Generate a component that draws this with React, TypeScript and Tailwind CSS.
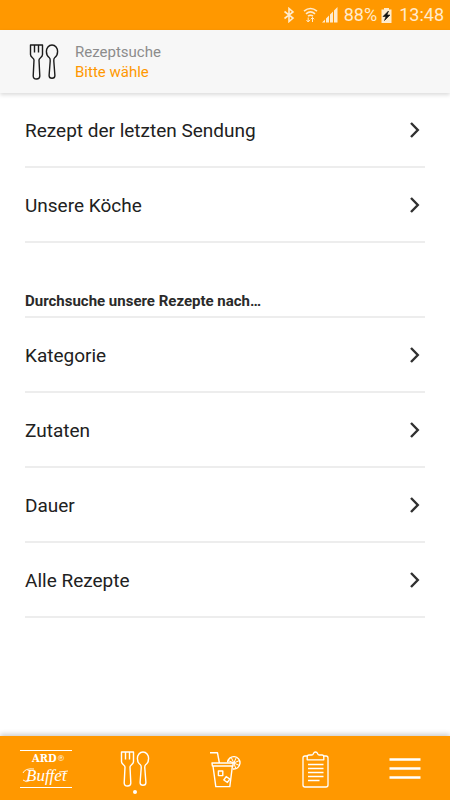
import React from "react";

const recipeRows = ["Rezept der letzten Sendung", "Unsere Köche"];
const filterRows = ["Kategorie", "Zutaten", "Dauer", "Alle Rezepte"];

function CutleryIcon() {
  return (
    <svg width="30" height="36" viewBox="0 0 30 36" fill="none" stroke="currentColor" strokeWidth="1.4" strokeLinejoin="round" aria-hidden="true">
      <path d="M1.5 1H13.5V10.5C13.5 13.5 10 13.8 10 16L10.8 32Q10.8 35 7.5 35Q4.2 35 4.2 32L5 16C5 13.8 1.5 13.5 1.5 10.5ZM5.5 1V8.5M9.5 1V8.5" />
      <path d="M23 1C19.6 1 17.4 4 17.4 7.5C17.4 10.5 18.7 12.6 20.4 13.8C21.3 14.5 21.3 15.5 21.2 17L20.1 31.5Q20.1 34.3 23 34.3Q25.9 34.3 25.9 31.5L24.8 17C24.7 15.5 24.7 14.5 25.6 13.8C27.3 12.6 28.6 10.5 28.6 7.5C28.6 4 26.4 1 23 1Z" />
    </svg>
  );
}

function LogoIcon() {
  return (
    <svg width="54" height="40" viewBox="0 0 54 40" fill="white" role="img" aria-label="ARD Buffet">
      <path d="M2 1.5H54M2 38.5H54" stroke="white" strokeWidth="1" />
      <text x="14" y="13" fontFamily="'DejaVu Serif Condensed', 'DejaVu Serif', serif" fontWeight="700" fontSize="11">ARD</text>
      <text x="39" y="12" fontFamily="'DejaVu Serif', serif" fontSize="8">®</text>
      <text x="8" y="32" fontFamily="'Liberation Serif', serif" fontStyle="italic" fontSize="17">Buffet</text>
      <path d="M5 24Q7 19 16 20M5 31Q8 34 12 31.5M41 23L50 22" stroke="white" fill="none" strokeWidth="0.9" />
    </svg>
  );
}

function DrinkIcon() {
  return (
    <svg width="32" height="37" viewBox="0 0 32 37" fill="none" stroke="currentColor" strokeWidth="1.4" strokeLinejoin="round" aria-hidden="true">
      <path d="M1 1.8H8.5L10.3 11.5M3 12H24V15H3.4ZM4 15L6.8 35.6H20.8L23.4 15" />
      <path d="M18.6 11.4A6.2 6.2 0 1 1 24 18" />
      <path d="M24.8 12L19.1 9.5M24.8 12L22.3 6.5M24.8 12L27.3 6.5M24.8 12L30.5 9.5M24.8 12L30.5 14.5M24.8 12L26.8 17.5" strokeWidth="1" />
      <path d="M9.4 20H13.8V24.6H9.4ZM17.2 25.6L20.8 28L18.4 31.4L14.8 29Z" />
    </svg>
  );
}

function ClipboardIcon() {
  return (
    <svg width="27" height="37" viewBox="0 0 27 37" fill="none" stroke="currentColor" strokeWidth="1.3" strokeLinejoin="round" aria-hidden="true">
      <path d="M5 5H3Q1 5 1 7V34Q1 36 3 36H24Q26 36 26 34V7Q26 5 24 5H22" />
      <path d="M5.2 8.8V6Q5.2 4 7 4H9.6Q11 4 11.3 2.8Q12 1 13.5 1Q15 1 15.7 2.8Q16 4 17.4 4H20Q21.8 4 21.8 6V8.8Z" />
      <path d="M6 13.5H21.5M6 17.5H21.5M6 21.5H21.5M6 25.5H21.5M6 29.5H17.5" />
    </svg>
  );
}

function MenuIcon() {
  return (
    <svg width="32" height="24" viewBox="0 0 32 24" stroke="currentColor" strokeWidth="2.4" aria-hidden="true">
      <path d="M0.5 2.5H31.5M0.5 11.5H31.5M0.5 20.5H31.5" />
    </svg>
  );
}

function StatusBar() {
  return (
    <div className="flex h-[30px] items-center justify-end bg-[#ff9800] pr-[6px] text-[#ffebcd]">
      <svg className="mr-[8px]" width="12" height="16" viewBox="0 0 12 16" fill="none" stroke="currentColor" strokeWidth="1.6" aria-hidden="true">
        <path d="M1.5 4.5L10 11L6 14.5V1.5L10 5L1.5 11.5" />
      </svg>
      <svg className="mr-[4px]" width="15" height="16" viewBox="0 0 15 16" fill="none" stroke="currentColor" strokeWidth="1.6" aria-hidden="true">
        <path d="M1 4.2Q7.5 -1.2 14 4.2M3 6.8Q7.5 3 12 6.8M5 9.2Q7.5 7.2 10 9.2" />
        <path d="M5.2 15V10.5M3.5 13L5.2 15L7 13M9.5 10.5V15M7.8 12.3L9.5 10.5L11.2 12.3" strokeWidth="1" />
      </svg>
      <svg className="mr-[6px]" width="16" height="16" viewBox="0 0 16 16" fill="currentColor" aria-hidden="true">
        <path d="M0 15.5L3 12.5V15.5ZM4 11.5L7 8.5V15.5H4ZM8 7.5L11 4.5V15.5H8ZM12 3.5L15.5 0V15.5H12Z" />
      </svg>
      <span className="text-[18px] leading-[30px]">88%</span>
      <svg className="mr-[7px] ml-[4px]" width="11" height="15" viewBox="0 0 11 15" aria-hidden="true">
        <path d="M3 0H8V1.5H10.5V15H0.5V1.5H3Z" fill="currentColor" />
        <path d="M7.5 3L2 8.5H5L3.5 12.5L9 7H6Z" fill="#111" stroke="#111" strokeWidth="0.6" />
      </svg>
      <span className="text-[18px] leading-[30px]">13:48</span>
    </div>
  );
}

function ListRow({ label }: { label: string }) {
  return (
    <li>
      <button type="button" className="flex h-[75px] w-full items-center justify-between border-b-2 border-[#ededed] pr-[5px] text-left text-[19px] text-[#212121]">
        <span className="pt-0.5 leading-7">{label}</span>
        <svg width="11" height="16" viewBox="0 0 11 16" fill="none" stroke="#303030" strokeWidth="2.4" aria-hidden="true">
          <path d="M2 1L8.8 8L2 15" />
        </svg>
      </button>
    </li>
  );
}

const tabs = [
  { label: "Start", icon: <LogoIcon />, active: false },
  { label: "Rezepte", icon: <CutleryIcon />, active: true },
  { label: "Getränke", icon: <DrinkIcon />, active: false },
  { label: "Einkaufsliste", icon: <ClipboardIcon />, active: false },
  { label: "Menü", icon: <MenuIcon />, active: false },
];

export default function App() {
  return (
    <div className="flex min-h-screen flex-col bg-white font-['Roboto',sans-serif]">
      <StatusBar />
      <header className="flex h-[63px] items-center bg-[#f7f7f7] pl-[29px] text-[#1c1c1c] shadow-[0_2px_4px_rgba(0,0,0,0.14)]">
        <CutleryIcon />
        <div className="ml-4 text-[15px] leading-5">
          <h1 className="text-[#8c8c8c]">Rezeptsuche</h1>
          <p className="text-[#ff9800]">Bitte wähle</p>
        </div>
      </header>
      <main className="flex-1 px-[25px]">
        <ul>
          {recipeRows.map((label) => (
            <ListRow key={label} label={label} />
          ))}
        </ul>
        <h2 className="flex h-[75px] items-end border-b-2 border-[#ededed] pb-[5px] text-[15px] leading-5 font-bold text-[#2a2a2a]">
          Durchsuche unsere Rezepte nach…
        </h2>
        <ul>
          {filterRows.map((label) => (
            <ListRow key={label} label={label} />
          ))}
        </ul>
      </main>
      <nav className="grid h-[64px] grid-cols-5 bg-[#ff9800] text-white shadow-[0_-2px_5px_rgba(0,0,0,0.2)]">
        {tabs.map((tab) => (
          <button key={tab.label} type="button" aria-label={tab.label} className="relative flex items-center justify-center pt-[2px]">
            {tab.icon}
            {tab.active && <span className="absolute bottom-[6px] left-1/2 size-1 -translate-x-1/2 rounded-full bg-white" />}
          </button>
        ))}
      </nav>
    </div>
  );
}
